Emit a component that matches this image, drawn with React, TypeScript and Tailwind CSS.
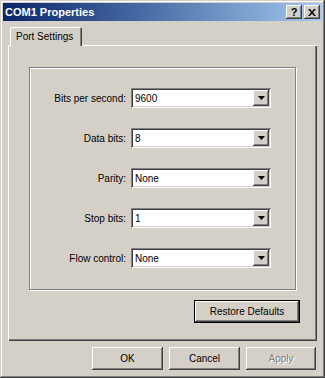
const bevel =
  'shadow-[inset_-1px_-1px_0_#404040,inset_1px_1px_0_#ffffff,inset_-2px_-2px_0_#808080,inset_2px_2px_0_#d4d0c8]';

interface ComboProps {
  label: string;
  value: string;
}

const Combo: React.FC<ComboProps> = ({ label, value }) => {
  return (
    <div className="flex items-center justify-end gap-[5px] pr-[24px]">
      <span className="text-[10px] text-black">{label}</span>
      <div className="flex h-[20px] w-[140px] items-center bg-white p-[2px] shadow-[inset_1px_1px_0_#808080,inset_-1px_-1px_0_#ffffff,inset_2px_2px_0_#404040,inset_-2px_-2px_0_#d4d0c8]">
        <span className="flex-1 pl-[2px] text-[10px] text-black">{value}</span>
        <div className={`flex h-[16px] w-[16px] items-center justify-center bg-[#d4d0c8] ${bevel}`}>
          <svg width="7" height="4" viewBox="0 0 7 4">
            <path d="M0 0h7L3.5 4z" fill="#000" />
          </svg>
        </div>
      </div>
    </div>
  );
};

interface ButtonProps {
  label: string;
  disabled?: boolean;
  isDefault?: boolean;
  width: string;
}

const WinButton: React.FC<ButtonProps> = ({ label, disabled, isDefault, width }) => {
  const inner = (
    <div className={`flex h-full w-full items-center justify-center bg-[#d4d0c8] ${bevel}`}>
      <span
        className={
          disabled
            ? 'text-[10px] text-[#808080] [text-shadow:1px_1px_0_#ffffff]'
            : 'text-[10px] text-black'
        }
      >
        {label}
      </span>
    </div>
  );
  if (isDefault) {
    return <div className={`h-[23px] ${width} border border-black`}>{inner}</div>;
  }
  return <div className={`h-[23px] ${width}`}>{inner}</div>;
};

const App: React.FC = () => {
  return (
    <div className="h-[378px] w-[325px] bg-[#d4d0c8] p-[3px] font-['Liberation_Sans',Arial,sans-serif] shadow-[inset_-1px_-1px_0_#404040,inset_1px_1px_0_#d4d0c8,inset_-2px_-2px_0_#808080,inset_2px_2px_0_#ffffff]">
      <div className="flex h-[18px] items-center bg-gradient-to-r from-[#0a246a] to-[#a6caf0] pl-[2px] pr-[2px]">
        <span className="flex-1 text-[11px] font-bold text-white">COM1 Properties</span>
        <div className="flex gap-[2px]">
          <div className={`flex h-[14px] w-[16px] items-center justify-center bg-[#d4d0c8] ${bevel}`}>
            <span className="text-[11px] leading-none font-bold text-black">?</span>
          </div>
          <div className={`flex h-[14px] w-[16px] items-center justify-center bg-[#d4d0c8] ${bevel}`}>
            <svg width="8" height="7" viewBox="0 0 8 7">
              <path d="M0 0h2l2 2.5L6 0h2L5 3.5 8 7H6L4 4.5 2 7H0l3-3.5z" fill="#000" />
            </svg>
          </div>
        </div>
      </div>

      <div className="mx-[5px] mt-[6px]">
        <div className="relative z-10 ml-[2px] -mb-px flex h-[19px] w-[72px] items-center rounded-t-[2px] bg-[#d4d0c8] pl-[6px] shadow-[inset_1px_1px_0_#ffffff,inset_-1px_0_0_#404040,inset_-2px_0_0_#808080]">
          <span className="text-[10px] text-black">Port Settings</span>
        </div>
        <div className="flex h-[296px] flex-col bg-[#d4d0c8] shadow-[inset_1px_1px_0_#ffffff,inset_-1px_-1px_0_#404040,inset_-2px_-2px_0_#808080]">
          <div className="mx-[21px] mt-[22px] flex h-[223px] flex-col gap-[20px] border border-[#808080] pt-[20px] shadow-[inset_1px_1px_0_#ffffff,1px_1px_0_#ffffff]">
            <Combo label="Bits per second:" value="9600" />
            <Combo label="Data bits:" value="8" />
            <Combo label="Parity:" value="None" />
            <Combo label="Stop bits:" value="1" />
            <Combo label="Flow control:" value="None" />
          </div>
          <div className="mt-[10px] flex justify-end pr-[17px]">
            <WinButton label="Restore Defaults" isDefault width="w-[106px]" />
          </div>
        </div>
      </div>

      <div className="mt-[6px] flex justify-end gap-[6px] pr-[6px]">
        <WinButton label="OK" width="w-[71px]" />
        <WinButton label="Cancel" width="w-[71px]" />
        <WinButton label="Apply" disabled width="w-[70px]" />
      </div>
    </div>
  );
};

export default App;
